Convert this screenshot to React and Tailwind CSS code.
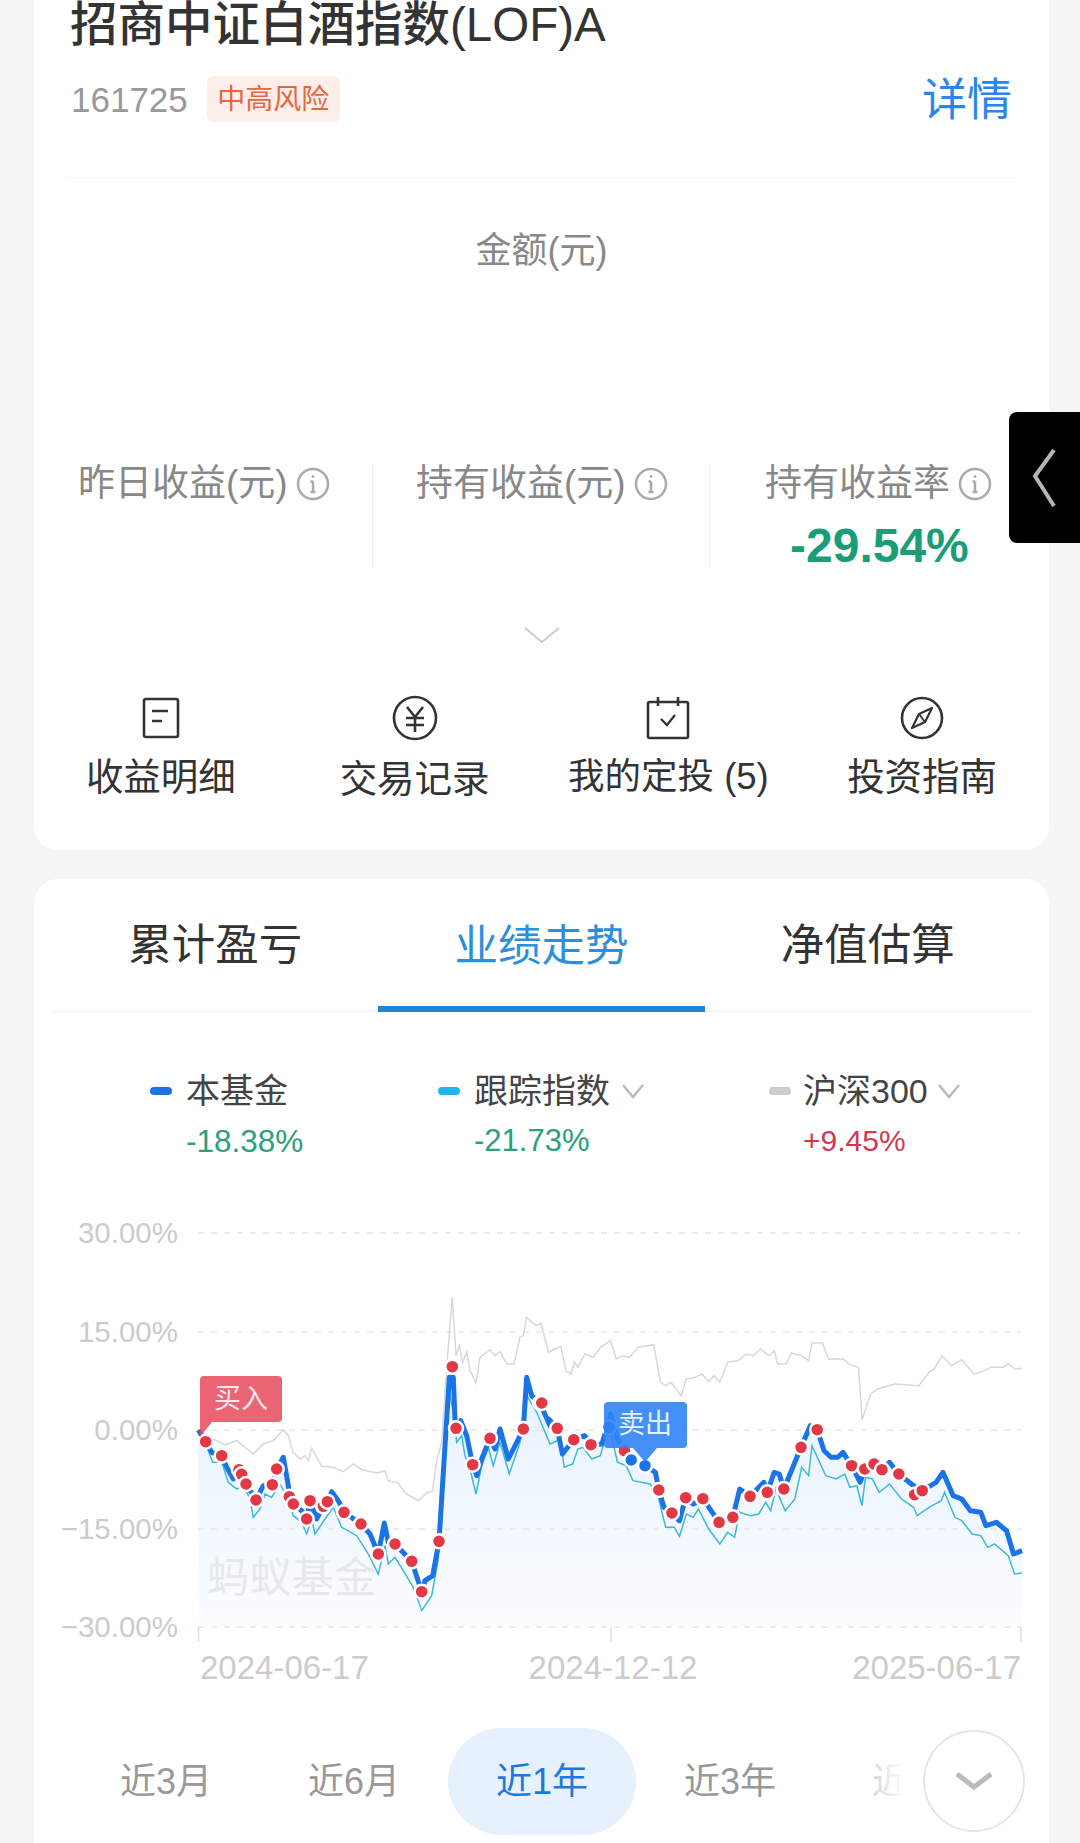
import React from 'react';

// chart traces, read off the left (a) and right (b) halves of the chart
const fromLeft = (pts) => pts.map(([x, y]) => [x / 3 + 40, y / 3 + 1200]);
const fromRight = (pts) => pts.map(([x, y]) => [x / 2.904 + 540, y / 3 + 1200]);
const toPath = (pts) => pts.map(([x, y], i) => `${i ? 'L' : 'M'}${x.toFixed(1)} ${y.toFixed(1)}`).join(' ');

const grayLine = [
  ...fromLeft([[475,693],[520,720],[555,738],[590,725],[640,765],[670,735],[700,725],[730,692],[745,710],[760,760],[780,780],[795,770],[805,785],[815,748],[845,802],[880,805],[910,818],[940,795],[965,812],[1010,822],[1035,815],[1045,845],[1075,852],[1095,882],[1135,905],[1160,882],[1178,875],[1190,785],[1205,730],[1222,480],[1237,295],[1248,470],[1258,440],[1268,490],[1280,460],[1290,515],[1308,552],[1320,475],[1350,452],[1365,470],[1380,458],[1400,495],[1422,495],[1440,415],[1450,410],[1460,355],[1475,370],[1490,380],[1503,372],[1525,460],[1545,448]]),
  ...fromRight([[25,460],[60,442],[75,515],[90,525],[100,490],[110,505],[130,465],[155,475],[175,445],[205,425],[222,480],[240,470],[260,475],[285,445],[330,437],[350,550],[365,560],[380,550],[410,590],[425,540],[450,535],[470,525],[490,548],[505,530],[522,548],[545,490],[575,485],[600,465],[620,470],[640,450],[665,470],[680,455],[690,495],[715,495],[730,462],[760,470],[780,485],[790,432],[820,432],[838,480],[880,480],[900,497],[925,505],[935,662],[960,585],[980,570],[1030,555],[1100,560],[1130,520],[1145,510],[1168,470],[1195,500],[1225,482],[1260,525],[1280,520],[1310,505],[1345,505],[1360,495],[1380,510],[1400,508]]),
];

const cyanLine = [
  ...fromLeft([[475,700],[497,735],[518,790],[545,790],[565,850],[590,870],[610,860],[630,900],[640,955],[660,930],[675,885],[695,895],[720,855],[745,900],[760,950],[785,970],[800,1005],[815,960],[825,1005],[855,960],[880,925],[905,985],[950,1010],[985,1065],[1015,1125],[1035,1040],[1045,1095],[1065,1075],[1090,1115],[1120,1165],[1145,1235],[1175,1190],[1195,1080],[1225,560],[1240,640],[1250,730],[1265,710],[1275,770],[1290,810],[1308,885],[1325,800],[1345,745],[1360,800],[1380,730],[1408,825],[1440,730],[1460,590],[1490,640],[1530,735]]),
  ...fromRight([[30,735],[60,720],[70,805],[95,795],[110,750],[125,745],[150,780],[175,770],[200,680],[225,790],[250,800],[270,845],[320,855],[345,900],[365,985],[390,985],[405,1012],[425,945],[445,955],[460,930],[490,990],[522,1035],[545,1000],[565,1015],[580,940],[610,950],[635,945],[655,910],[670,935],[685,870],[712,935],[740,900],[760,805],[780,830],[790,740],[830,830],[860,840],[885,825],[900,865],[920,860],[935,920],[945,835],[965,840],[985,880],[1015,855],[1050,900],[1085,925],[1095,950],[1130,925],[1165,905],[1175,880],[1205,955],[1225,965],[1255,1005],[1280,1010],[1300,1045],[1320,1035],[1360,1070],[1378,1125],[1400,1122]]),
];

const blueLine = [
  ...fromLeft([[475,693],[497,730],[515,760],[545,770],[560,805],[580,840],[600,820],[618,855],[648,903],[670,860],[697,857],[710,810],[730,775],[745,860],[748,893],[760,915],[785,935],[800,960],[810,905],[830,960],[850,920],[862,908],[875,878],[895,905],[912,940],[963,975],[990,1005],[1015,1065],[1033,972],[1045,1030],[1065,1035],[1115,1087],[1145,1178],[1155,1145],[1178,1130],[1197,1027],[1228,535],[1240,535],[1245,660],[1248,688],[1262,665],[1280,710],[1298,797],[1310,830],[1325,780],[1350,718],[1365,750],[1380,690],[1405,780],[1430,730],[1450,690],[1460,535],[1475,590],[1500,612],[1530,680]]),
  ...fromRight([[25,660],[50,688],[65,765],[98,722],[130,710],[148,737],[180,735],[205,645],[225,720],[245,755],[265,783],[305,800],[335,820],[345,873],[360,925],[383,942],[405,965],[423,896],[445,915],[473,899],[520,970],[560,955],[580,870],[610,892],[650,850],[660,880],[680,820],[695,825],[708,870],[730,815],[758,745],[785,680],[805,692],[825,755],[845,775],[865,775],[880,760],[905,800],[930,850],[943,810],[970,795],[993,812],[1015,790],[1042,825],[1085,860],[1110,875],[1150,850],[1170,820],[1200,890],[1225,900],[1250,935],[1280,940],[1295,980],[1325,970],[1355,995],[1375,1065],[1400,1055]]),
];

const redDots = [
  ...fromLeft([[597,812],[605,826],[618,855],[497,728],[545,770],[648,903],[697,857],[710,810],[748,893],[760,915],[850,922],[800,960],[810,905],[862,908],[912,940],[963,975],[1015,1065],[1065,1035],[1115,1087],[1145,1178],[1197,1027],[1237,503],[1248,688],[1298,797],[1350,718],[1450,690],[1500,612]]),
  ...fromRight([[5,612],[50,688],[98,722],[148,737],[245,755],[345,873],[383,942],[423,896],[473,899],[520,970],[560,955],[610,892],[660,880],[708,870],[758,745],[805,692],[905,800],[943,810],[970,795],[993,812],[1042,825],[1088,887],[1110,875]]),
];

const blueDots = fromRight([[200,685],[265,783],[305,800]]);

const gridRows = [
  { y: 1234, label: '30.00%' },
  { y: 1333, label: '15.00%' },
  { y: 1431, label: '0.00%' },
  { y: 1530, label: '−15.00%' },
  { y: 1628, label: '−30.00%' },
];

const InfoIcon = () => (
  <svg width="34" height="34" viewBox="0 0 34 34" fill="none" stroke="#aaaaaa" strokeWidth="2.5" className="shrink-0">
    <circle cx="17" cy="17" r="15" />
    <path d="M17 14.5V25M14.5 14.5H17M14.5 25H19.5" />
    <circle cx="17" cy="9.5" r="1.4" fill="#aaaaaa" stroke="none" />
  </svg>
);

const SmallChevron = () => (
  <svg width="24" height="16" viewBox="0 0 24 16" fill="none" stroke="#bbbbbb" strokeWidth="2.6" className="-ml-[3px] shrink-0">
    <path d="M2 2L12 14L22 2" />
  </svg>
);

const DocIcon = () => (
  <svg width="38" height="42" viewBox="0 0 38 42" fill="none" stroke="#333333" strokeWidth="2.6">
    <rect x="2" y="2" width="34" height="38" rx="2" />
    <path d="M10 14H26M10 24H20" />
  </svg>
);

const YuanIcon = () => (
  <svg width="46" height="46" viewBox="0 0 46 46" fill="none" stroke="#333333" strokeWidth="2.6">
    <circle cx="23" cy="23" r="21" />
    <path d="M15 12L23 22L31 12M14 23H32M14 30H32M23 22V37" />
  </svg>
);

const CalendarIcon = () => (
  <svg width="44" height="44" viewBox="0 0 44 44" fill="none" stroke="#333333" strokeWidth="2.6">
    <rect x="2" y="6" width="40" height="36" rx="1.5" />
    <path d="M12 1V10M32 1V10" />
    <path d="M15 23L21 29L29 19" strokeWidth="2.2" />
  </svg>
);

const CompassIcon = () => (
  <svg width="44" height="44" viewBox="0 0 44 44" fill="none" stroke="#333333" strokeWidth="2.6">
    <circle cx="22" cy="22" r="20" />
    <path d="M32 12L25 26L12 32L19 18Z" strokeWidth="2.2" strokeLinejoin="round" />
    <path d="M19 18L25 26" strokeWidth="1.8" />
  </svg>
);

const stats = [
  { label: '昨日收益(元)', pl: 'pl-[44px]' },
  { label: '持有收益(元)', pl: 'pl-[43px]' },
  { label: '持有收益率', pl: 'pl-[55px]', value: '-29.54%' },
];

const actions = [
  { label: '收益明细', icon: <DocIcon />, mt: 'mt-[16px]', size: 'text-[37.5px]' },
  { label: '交易记录', icon: <YuanIcon />, mt: 'mt-[18px]', size: 'text-[37.5px]' },
  { label: '我的定投 (5)', icon: <CalendarIcon />, mt: 'mt-[16px]', size: 'text-[36.5px]' },
  { label: '投资指南', icon: <CompassIcon />, mt: 'mt-[16px]', size: 'text-[37.5px]' },
];

const Chart = () => (
  <svg width="1015" height="490" viewBox="34 1200 1015 490" className="block mt-[40px]">
    <defs>
      <linearGradient id="area" x1="0" y1="1400" x2="0" y2="1628" gradientUnits="userSpaceOnUse">
        <stop offset="0" stopColor="#e8f2fe" />
        <stop offset="1" stopColor="#fbfdff" />
      </linearGradient>
    </defs>
    <path d={`${toPath(blueLine)} L1022 1628 L198 1628 Z`} fill="url(#area)" />
    <text x="207" y="1593" fontSize="42" fill="#e6e8ec" letterSpacing="0.5">蚂蚁基金</text>
    {gridRows.map((row) => (
      <g key={row.y}>
        <line x1="198" x2="1021" y1={row.y} y2={row.y} stroke="#e6e6e6" strokeWidth="1.5" strokeDasharray="6 7" />
        <text x="178" y={row.y + 10} fontSize="29.5" fill="#cccccc" textAnchor="end">{row.label}</text>
      </g>
    ))}
    <path d="M198.5 1628V1643M611 1628V1643M1021 1628V1643" stroke="#dddddd" strokeWidth="1.5" fill="none" />
    <path d={toPath(grayLine)} fill="none" stroke="#d8d8d8" strokeWidth="1.5" />
    <path d={toPath(cyanLine)} fill="none" stroke="#3dbad6" strokeWidth="1.5" />
    <path d={toPath(blueLine)} fill="none" stroke="#1a74e8" strokeWidth="5" strokeLinejoin="round" />
    {redDots.map(([x, y], i) => (
      <circle key={i} cx={x} cy={y} r="7" fill="#e23744" stroke="#ffffff" strokeWidth="2.5" />
    ))}
    {blueDots.map(([x, y], i) => (
      <circle key={i} cx={x} cy={y} r="7" fill="#1a74e8" stroke="#ffffff" strokeWidth="2.5" />
    ))}
    <path d="M204 1377H278Q282 1377 282 1381V1419Q282 1423 278 1423H212L200 1438V1381Q200 1377 204 1377Z" fill="#e8495b" fillOpacity="0.85" />
    <text x="241" y="1409" fontSize="27" fill="#ffe9ea" textAnchor="middle">买入</text>
    <path d="M608 1403H683Q687 1403 687 1407V1445Q687 1449 683 1449H657L645 1463L633 1449H608Q604 1449 604 1445V1407Q604 1403 608 1403Z" fill="#2f84f5" fillOpacity="0.9" />
    <text x="645" y="1434" fontSize="27" fill="#e8f2ff" textAnchor="middle">卖出</text>
    <text x="200" y="1680" fontSize="33" fill="#cccccc">2024-06-17</text>
    <text x="613" y="1680" fontSize="33" fill="#cccccc" textAnchor="middle">2024-12-12</text>
    <text x="1021" y="1680" fontSize="33" fill="#cccccc" textAnchor="end">2025-06-17</text>
  </svg>
);

export default function App() {
  return (
    <div className="relative h-[1843px] w-[1080px] overflow-hidden bg-[#f5f5f5] [font-family:'Liberation_Sans','Noto_Sans_CJK_SC',sans-serif]">
      {/* holding card */}
      <section className="ml-[34px] h-[850px] w-[1015px] rounded-b-[24px] bg-white">
        <div className="pl-[36px] text-[47.5px] leading-[50px] font-medium whitespace-nowrap text-[#333333]">招商中证白酒指数(LOF)A</div>
        <div className="mt-[26px] flex h-[46px] items-center justify-between px-[37px]">
          <div className="flex items-center gap-[19px]">
            <span className="pt-[3px] text-[35px] text-[#999999]">161725</span>
            <span className="flex h-[46px] w-[133px] items-center justify-center rounded-[6px] bg-[#fdeee9] pt-[2px] text-[28px] text-[#e8663e]">中高风险</span>
          </div>
          <span className="pt-[3px] text-[45px] text-[#2a86ea]">详情</span>
        </div>
        <div className="mx-[34px] mt-[55px] h-px bg-[#f3f3f3]" />
        <div className="mt-[53px] text-center text-[36px] leading-[40px] text-[#888888]">金额(元)</div>

        <div className="mt-[193px] grid h-[104px] grid-cols-[338px_337px_340px]">
          {stats.map((s, i) => (
            <div key={s.label} className={`${s.pl} ${i > 0 ? 'border-l border-[#eeeeee]' : ''}`}>
              <div className="flex h-[40px] items-center gap-[8px] text-[37px] whitespace-nowrap text-[#888888]">
                {s.label}
                <InfoIcon />
              </div>
              {s.value && <div className="mt-[20px] pl-[25px] text-[48px] leading-[44px] font-bold text-[#1a9e78]">{s.value}</div>}
            </div>
          ))}
        </div>

        <div className="mt-[59px] flex justify-center">
          <svg width="36" height="16" viewBox="0 0 36 16" fill="none" stroke="#cccccc" strokeWidth="2">
            <path d="M1 1L18 15L35 1" />
          </svg>
        </div>

        <div className="mt-[52px] grid grid-cols-4">
          {actions.map((a) => (
            <div key={a.label} className="flex flex-col items-center">
              <div className="flex h-[46px] items-center">{a.icon}</div>
              <div className={`${a.mt} ${a.size} leading-[40px] whitespace-nowrap text-[#333333]`}>{a.label}</div>
            </div>
          ))}
        </div>
      </section>

      {/* black side handle */}
      <div className="absolute top-[412px] right-0 flex h-[131px] w-[71px] items-center rounded-l-[8px] bg-black pl-[23px]">
        <svg width="24" height="60" viewBox="0 0 24 60" fill="none" stroke="#b5b5b5" strokeWidth="4">
          <path d="M22 2L3 28L22 58" />
        </svg>
      </div>

      {/* performance card */}
      <section className="relative mt-[29px] ml-[34px] h-[1000px] w-[1015px] overflow-hidden rounded-t-[24px] bg-white">
        <div className="mx-[18px] grid h-[133px] grid-cols-3 border-b border-[#eeeeee]">
          <div className="flex h-[132px] items-center justify-center pt-[2px] text-[43.5px] text-[#333333]">累计盈亏</div>
          <div className="flex h-[133px] items-center justify-center border-b-[6px] border-[#1c85d6] pt-[8px] text-[43.5px] text-[#2a8fdc]">业绩走势</div>
          <div className="flex h-[132px] items-center justify-center pt-[2px] text-[43.5px] text-[#333333]">净值估算</div>
        </div>

        <div className="mt-[59px] flex pl-[116px]">
          <div className="w-[288px]">
            <div className="flex h-[40px] items-center gap-[14px] text-[34px] whitespace-nowrap text-[#444444]">
              <span className="h-[8px] w-[22px] rounded-full bg-[#1a74e8]" />本基金
            </div>
            <div className="mt-[12px] pl-[36px] text-[31.5px] leading-[36px] text-[#2ba07c]">-18.38%</div>
          </div>
          <div className="w-[331px]">
            <div className="flex h-[40px] items-center gap-[14px] text-[34px] whitespace-nowrap text-[#444444]">
              <span className="h-[8px] w-[22px] rounded-full bg-[#1fb6ee]" />跟踪指数<SmallChevron />
            </div>
            <div className="mt-[12px] pl-[36px] text-[31px] leading-[36px] text-[#2ba07c]">-21.73%</div>
          </div>
          <div>
            <div className="flex h-[40px] items-center gap-[12px] text-[34px] whitespace-nowrap text-[#444444]">
              <span className="h-[8px] w-[22px] rounded-full bg-[#cccccc]" />沪深300<SmallChevron />
            </div>
            <div className="mt-[12px] pl-[34px] text-[30px] leading-[36px] text-[#d2384f]">+9.45%</div>
          </div>
        </div>

        <Chart />

        <div className="mt-[39px] flex pl-[38px] text-[36px] text-[#999999]">
          <div className="flex h-[107px] w-[188px] items-center justify-center">近3月</div>
          <div className="flex h-[107px] w-[188px] items-center justify-center">近6月</div>
          <div className="flex h-[107px] w-[188px] items-center justify-center rounded-full bg-[#e6f1fd] text-[#1f78dc]">近1年</div>
          <div className="flex h-[107px] w-[188px] items-center justify-center">近3年</div>
          <div className="flex h-[107px] w-[188px] items-center justify-center text-[#cccccc]">近5年</div>
        </div>

        {/* fade under the expand button */}
        <div className="absolute top-[848px] left-[830px] h-[107px] w-[64px] bg-linear-to-r from-white/0 to-white to-[65%]" />
        <button className="absolute top-[851px] left-[889px] flex h-[102px] w-[102px] items-center justify-center rounded-full border-2 border-[#e5e5e5] bg-white">
          <svg width="38" height="20" viewBox="0 0 38 20" fill="none" stroke="#bbbbbb" strokeWidth="5">
            <path d="M2 3L19 16L36 3" />
          </svg>
        </button>
      </section>
    </div>
  );
}
